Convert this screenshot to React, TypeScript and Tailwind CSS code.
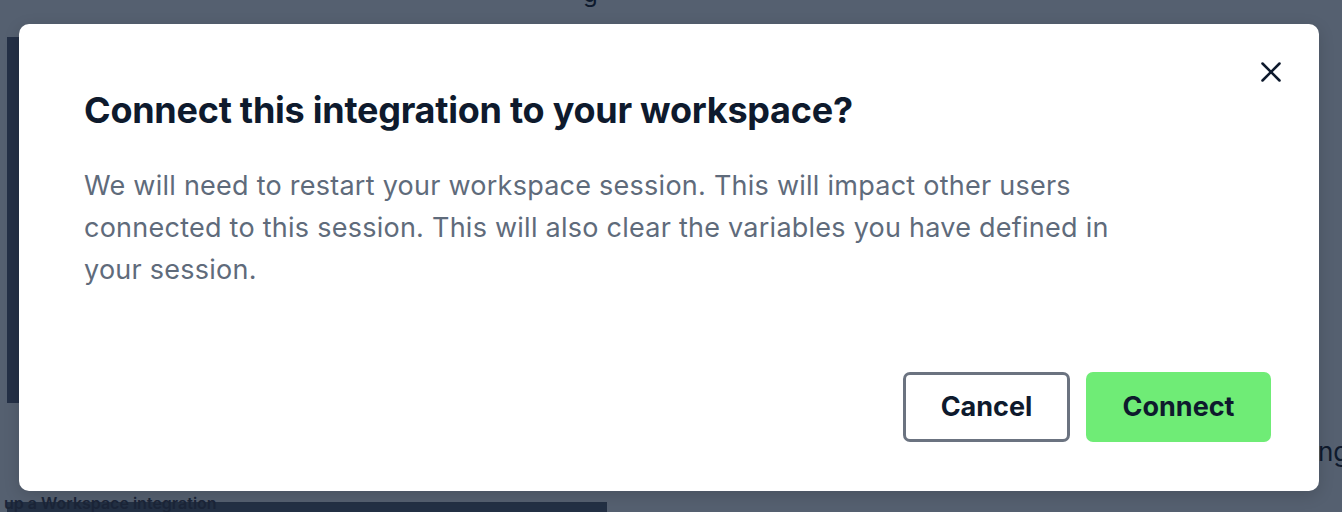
import { X } from 'lucide-react'

export default function App() {
  return (
    <div
      className="relative w-[1342px] h-[512px] overflow-hidden bg-[#556070]"
      style={{ fontFamily: 'Inter, "Noto Sans", sans-serif' }}
    >
      {/* dimmed page behind the modal */}
      <div className="absolute left-[7px] top-[37px] w-[12px] h-[366px] bg-[#243046]" />
      <div className="absolute left-[583px] top-[-24px] text-[24px] text-[#0e1a2d]">g</div>
      <div className="absolute left-[1318px] top-[432px] text-[26px] text-[#0e1a2d]">ng</div>
      <div className="absolute left-[7px] top-[502px] w-[600px] h-[20px] bg-[#233044]" />
      <div className="absolute left-[4px] top-[495px] text-[16px] font-semibold text-[#1b2538] leading-none">
        up a Workspace integration
      </div>

      {/* modal */}
      <div className="absolute left-[19px] top-[24px] w-[1300px] h-[467px] bg-white rounded-[10px] shadow-[0_4px_16px_rgba(0,0,0,0.15)]">
        <button className="absolute right-[31px] top-[31px] text-[#0e1a2d]" aria-label="Close">
          <X size={34} strokeWidth={1.8} />
        </button>
        <div className="flex flex-col h-full pl-[65px] pr-[48px] pt-[64px] pb-[49px]">
          <h2 className="text-[36px] font-bold leading-[44px] tracking-[-0.25px] text-[#0e1a2d]">
            Connect this integration to your workspace?
          </h2>
          <p className="mt-[33px] max-w-[1070px] text-[27px] leading-[42px] tracking-[0.25px] text-[#5f6b7b]">
            We will need to restart your workspace session. This will impact other users connected to
            this session. This will also clear the variables you have defined in your session.
          </p>
          <div className="mt-auto flex justify-end gap-[16px]">
            <button className="w-[167px] h-[70px] rounded-[7px] border-[3px] border-[#6b7380] bg-white text-[27px] font-bold text-[#0e1a2d]">
              Cancel
            </button>
            <button className="w-[185px] h-[70px] rounded-[7px] bg-[#6fec76] text-[27px] font-bold text-[#0e1a2d]">
              Connect
            </button>
          </div>
        </div>
      </div>
    </div>
  )
}
